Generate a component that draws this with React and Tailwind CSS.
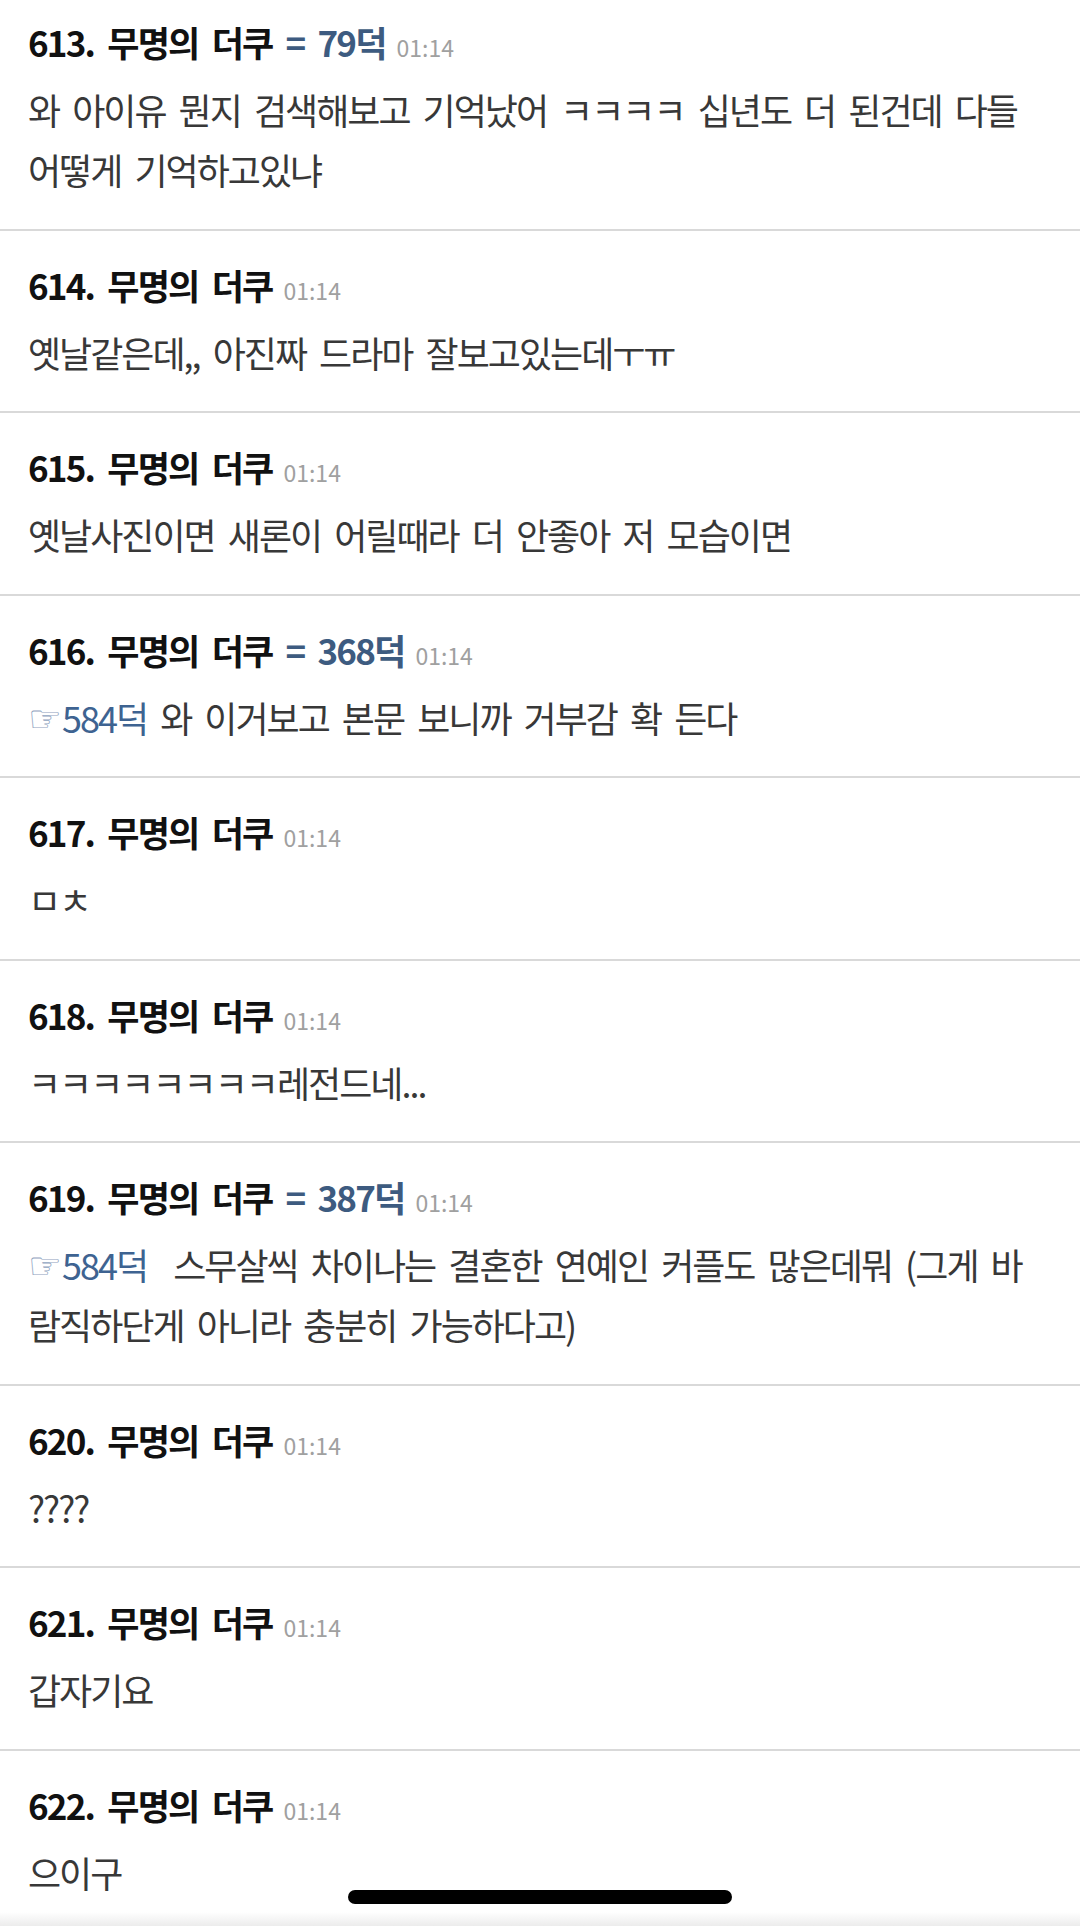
import React from "react";

const posts = [
  { n: 613, ref: "= 79덕", lines: [[{ t: "와 아이유 뭔지 검색해보고 기억났어 ㅋㅋㅋㅋ 십년도 더 된건데 다들" }], [{ t: "어떻게 기억하고있냐" }]] },
  { n: 614, lines: [[{ t: "옛날같은데,, 아진짜 드라마 잘보고있는데ㅜㅠ" }]] },
  { n: 615, lines: [[{ t: "옛날사진이면 새론이 어릴때라 더 안좋아 저 모습이면" }]] },
  { n: 616, ref: "= 368덕", lines: [[{ hand: true }, { link: "584덕" }, { t: " 와 이거보고 본문 보니까 거부감 확 든다" }]] },
  { n: 617, lines: [[{ t: "ㅁㅊ" }]] },
  { n: 618, lines: [[{ t: "ㅋㅋㅋㅋㅋㅋㅋㅋ레전드네..." }]] },
  {
    n: 619,
    ref: "= 387덕",
    lines: [
      [{ hand: true }, { link: "584덕" }, { t: "\u00a0 스무살씩 차이나는 결혼한 연예인 커플도 많은데뭐 (그게 바" }],
      [{ t: "람직하단게 아니라 충분히 가능하다고)" }],
    ],
  },
  { n: 620, lines: [[{ t: "????" }]] },
  { n: 621, lines: [[{ t: "갑자기요" }]] },
  { n: 622, lines: [[{ t: "으이구" }]] },
];

function Seg({ b }) {
  if (b.hand)
    return (
      <span className="inline-block w-[34px] font-['DejaVu_Sans',sans-serif] text-[38px] leading-none tracking-normal text-[#8fa4c0] align-[1px]">
        ☞
      </span>
    );
  if (b.link) return <span className="text-[#3e6391]">{b.link}</span>;
  return <span>{b.t}</span>;
}

function Post({ p, first }) {
  return (
    <div
      className={`border-b-2 border-[#d9d9d9] pl-[28px] pr-[36px] pt-[30px] pb-[29.5px] ${first ? "mt-[-12px]" : ""}`}
    >
      <div className="h-[48px] leading-[48px] whitespace-nowrap">
        <span className="text-[35px] font-bold tracking-[-1.8px] text-[#111111]">{p.n}. 무명의 더쿠</span>
        {p.ref && (
          <span className="ml-[13px] text-[35px] font-bold tracking-[-1.8px] text-[#3d5b80]">{p.ref}</span>
        )}
        <span className="ml-[11px] text-[23px] tracking-normal [word-spacing:0px] text-[#a0a0a0]">01:14</span>
      </div>
      <div className="mt-[13px] text-[36px] leading-[60px] text-[#383838]">
        {p.lines.map((line, li) => (
          <div key={li} className="h-[60px] whitespace-nowrap">
            {line.map((b, i) => (
              <Seg key={i} b={b} />
            ))}
          </div>
        ))}
      </div>
    </div>
  );
}

export default function App() {
  return (
    <div className="relative h-[1926px] w-[1080px] overflow-hidden bg-white font-['Noto_Sans_CJK_KR','Noto_Sans',sans-serif] tracking-[-2px] [word-spacing:7px]">
      {posts.map((p, i) => (
        <Post key={p.n} p={p} first={i === 0} />
      ))}
      <div className="absolute bottom-0 left-0 h-[14px] w-full bg-gradient-to-b from-white to-[#ececec]" />
      <div className="absolute left-[348px] top-[1890px] h-[14px] w-[384px] rounded-full bg-black" />
    </div>
  );
}
